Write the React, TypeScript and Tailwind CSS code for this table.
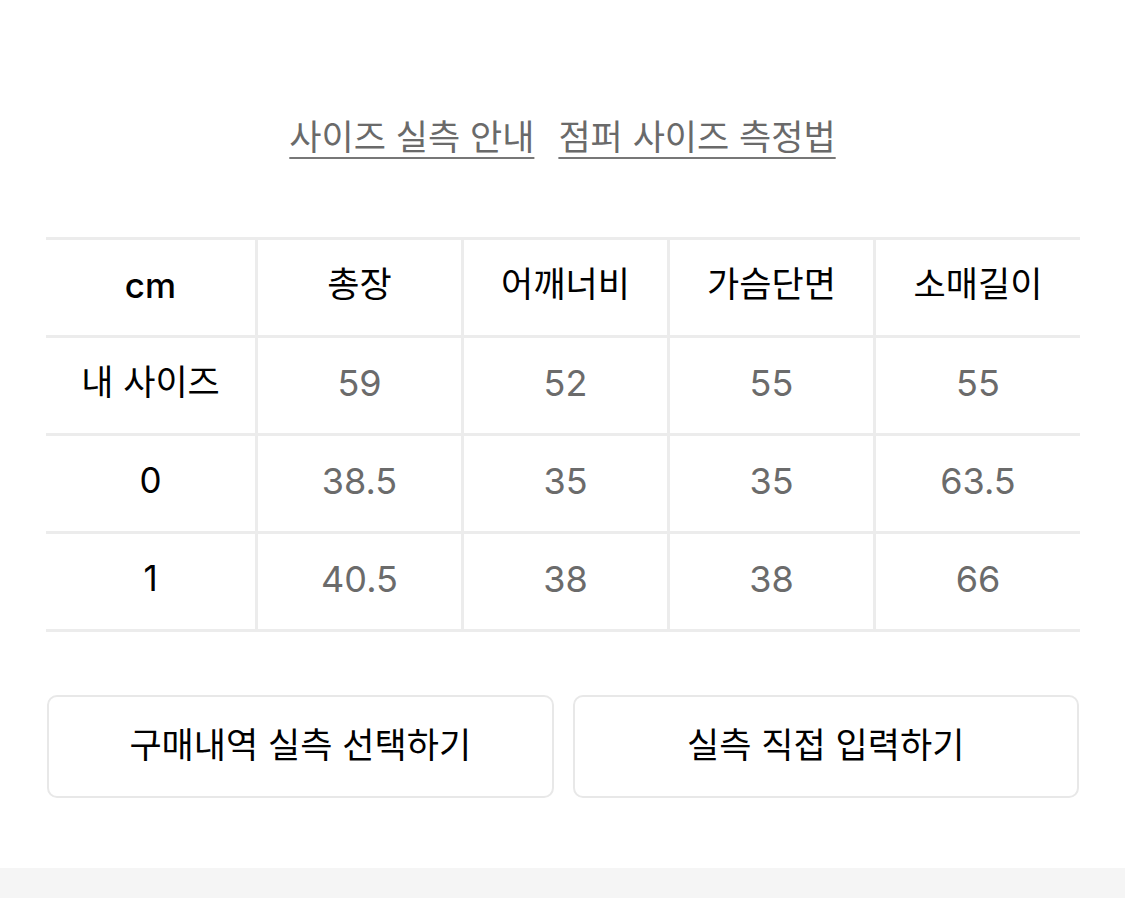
import React from 'react';

const headers = ['총장', '어깨너비', '가슴단면', '소매길이'];

const rows: { label: string; values: string[] }[] = [
  { label: '내 사이즈', values: ['59', '52', '55', '55'] },
  { label: '0', values: ['38.5', '35', '35', '63.5'] },
  { label: '1', values: ['40.5', '38', '38', '66'] },
];

const SizeTable: React.FC = () => {
  return (
    <div className="pl-[46px] pr-[45px]">
      <div className="border-b-[3px] border-[#ececec]">
        <div className="grid grid-cols-[209px_206px_206px_206px_1fr] h-[98px] border-t-[3px] border-[#ececec]">
          <div className="flex items-center justify-center pb-[4px] text-[35px] font-medium text-black">cm</div>
          {headers.map((h) => (
            <div
              key={h}
              className="flex items-center justify-center pb-[6px] border-l-[3px] border-[#ececec] text-[35px] text-black"
            >
              {h}
            </div>
          ))}
        </div>
        {rows.map((row) => (
          <div
            key={row.label}
            className="grid grid-cols-[209px_206px_206px_206px_1fr] h-[98px] border-t-[3px] border-[#ececec]"
          >
            <div className="flex items-center justify-center pb-[6px] text-[35px] text-black">{row.label}</div>
            {row.values.map((v, i) => (
              <div
                key={i}
                className="flex items-center justify-center pb-[6px] border-l-[3px] border-[#ececec] text-[36px] text-[#6b6b6b]"
              >
                {v}
              </div>
            ))}
          </div>
        ))}
      </div>
    </div>
  );
};

const App: React.FC = () => {
  return (
    <div
      className="w-[1125px] h-[898px] bg-white flex flex-col"
      style={{ fontFamily: 'Inter, "Noto Sans CJK KR", sans-serif' }}
    >
      <div className="h-[237px] pt-[114px] flex justify-center gap-[24px]">
        <a className="text-[35px] leading-[46px] text-[#6a6a6a] underline decoration-2 underline-offset-[7px] decoration-[#777]">
          사이즈 실측 안내
        </a>
        <a className="text-[35px] leading-[46px] text-[#6a6a6a] underline decoration-2 underline-offset-[7px] decoration-[#777]">
          점퍼 사이즈 측정법
        </a>
      </div>

      <SizeTable />

      <div className="mt-[63px] pl-[47px] pr-[46px] grid grid-cols-2 gap-[19px]">
        <button className="h-[103px] pb-[2px] rounded-[10px] border-2 border-[#e8e8e8] bg-white text-[35px] text-black">
          구매내역 실측 선택하기
        </button>
        <button className="h-[103px] pb-[2px] rounded-[10px] border-2 border-[#e8e8e8] bg-white text-[35px] text-black">
          실측 직접 입력하기
        </button>
      </div>

      <div className="flex-1" />
      <div className="h-[30px] bg-[#f5f5f5]" />
    </div>
  );
};

export default App;
